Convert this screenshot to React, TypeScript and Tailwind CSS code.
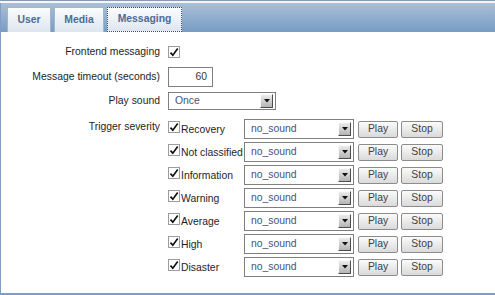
import React from "react";

const severities = [
  "Recovery",
  "Not classified",
  "Information",
  "Warning",
  "Average",
  "High",
  "Disaster",
];

function CheckMark() {
  return (
    <span className="w-[12px] h-[12px] border border-[#9c9c9c] bg-white flex items-center justify-center shrink-0">
      <svg width="11" height="11" viewBox="0 0 11 11">
        <path d="M1.6 5.6 L4.2 8.4 L9.6 1.2" fill="none" stroke="#111" strokeWidth="1.8" />
      </svg>
    </span>
  );
}

function SelectBox({ value, width, height }: { value: string; width: string; height: string }) {
  return (
    <div className={`${width} ${height} border border-[#7f7f7f] bg-white flex items-center justify-between pl-[6px] pr-[2px] shrink-0`}>
      <span className="text-[#45537a] leading-none">{value}</span>
      <span className="w-[13px] h-[14px] bg-gradient-to-b from-[#ececec] to-[#b4b4b4] border-t border-l border-t-[#fafafa] border-l-[#fafafa] border-r border-b border-r-[#4d4d4d] border-b-[#4d4d4d] flex items-center justify-center">
        <svg width="6" height="4" viewBox="0 0 6 4">
          <path d="M0 0 H6 L3 3.5 Z" fill="#111" />
        </svg>
      </span>
    </div>
  );
}

function Btn({ children, width }: { children: React.ReactNode; width: string }) {
  return (
    <button className={`${width} h-[17px] border border-[#8c8c8c] rounded-[2px] bg-gradient-to-b from-[#fbfbfb] to-[#dadada] text-[#3f3f3f] leading-none flex items-center justify-center`}>
      {children}
    </button>
  );
}

export default function App() {
  const tabs = [
    { name: "User", w: "w-[44px]", active: false },
    { name: "Media", w: "w-[50px]", active: false },
    { name: "Messaging", w: "w-[75px]", active: true },
  ];

  return (
    <div className="w-[495px] h-[295px] bg-white flex flex-col font-['Liberation_Sans',Arial,sans-serif] text-[10.4px] text-[#1e1e1e] overflow-hidden">
      <div className="h-[1px] bg-[#8799b3]" />
      <div className="h-[2px] bg-[#f4f6f9]" />
      <div className="h-[29px] bg-gradient-to-b from-[#aabfd6] to-[#779dc4] flex items-end gap-[3px] pl-[6px] border-l border-[#7f9ec3]">
        {tabs.map((t) => (
          <div
            key={t.name}
            className={`${t.w} h-[25px] bg-gradient-to-b from-[#fbfcfd] to-[#dde6f0] flex items-center justify-center pb-[1px] font-bold text-[#4e6c94] ${
              t.active ? "border border-dotted border-[#3f4e66]" : "border-x border-t border-[#a3b6cc]"
            }`}
          >
            {t.name}
          </div>
        ))}
      </div>

      <div className="flex-1 flex flex-col border-l border-b-2 border-[#7f9ec3] pt-[12px]">
        <div className="flex items-center h-[16px]">
          <div className="w-[159px] text-right">Frontend messaging</div>
          <div className="ml-[8px]">
            <CheckMark />
          </div>
        </div>

        <div className="flex items-center h-[20px] mt-[7px]">
          <div className="w-[159px] text-right">Message timeout (seconds)</div>
          <div className="ml-[8px] w-[45px] h-[20px] border border-[#7f7f7f] bg-white flex items-center justify-end pr-[5px] text-[#3a3a3a]">
            60
          </div>
        </div>

        <div className="flex items-center h-[18px] mt-[5px]">
          <div className="w-[159px] text-right">Play sound</div>
          <div className="ml-[8px]">
            <SelectBox value="Once" width="w-[108px]" height="h-[18px]" />
          </div>
        </div>

        <div className="flex mt-[9px]">
          <div className="w-[159px] text-right leading-[16px]">Trigger severity</div>
          <div className="ml-[8px] flex flex-col gap-[3px]">
            {severities.map((s) => (
              <div key={s} className="flex items-center h-[20px]">
                <div className="w-[76px] h-[20px] flex items-start">
                  <span className="mt-[2px]">
                    <CheckMark />
                  </span>
                  <span className="ml-[1px] mt-[3px] leading-[16px] whitespace-nowrap">{s}</span>
                </div>
                <SelectBox value="no_sound" width="w-[110px]" height="h-[20px]" />
                <div className="ml-[4px]">
                  <Btn width="w-[40px]">Play</Btn>
                </div>
                <div className="ml-[3px]">
                  <Btn width="w-[42px]">Stop</Btn>
                </div>
              </div>
            ))}
          </div>
        </div>
      </div>
    </div>
  );
}
